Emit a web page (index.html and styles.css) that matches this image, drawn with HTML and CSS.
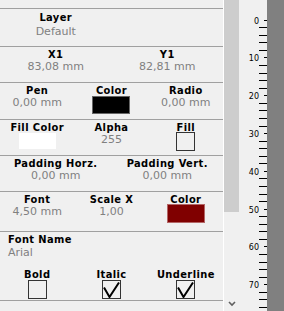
FILE: index.html
```html
<!DOCTYPE html>
<html lang="en">
    <head>
        <meta charset="UTF-8">
        <title>Properties</title>
        <link rel="stylesheet" href="styles.css">
    </head>
    <body>
        <div class="window">
            <div class="panel">
                <div class="section cols-2 h-layer">
                    <div class="field"><span class="label">Layer</span><span class="value">Default</span></div>
                </div>
                <div class="section cols-2 h-36">
                    <div class="field"><span class="label">X1</span><span class="value">83,08 mm</span></div>
                    <div class="field"><span class="label">Y1</span><span class="value">82,81 mm</span></div>
                </div>
                <div class="section cols-3 h-37">
                    <div class="field"><span class="label">Pen</span><span class="value">0,00 mm</span></div>
                    <div class="field"><span class="label">Color</span><span class="swatch black"></span></div>
                    <div class="field"><span class="label">Radio</span><span class="value">0,00 mm</span></div>
                </div>
                <div class="section cols-3 h-36">
                    <div class="field"><span class="label">Fill Color</span><span class="swatch white"></span></div>
                    <div class="field"><span class="label">Alpha</span><span class="value">255</span></div>
                    <div class="field"><span class="label">Fill</span><span class="check"></span></div>
                </div>
                <div class="section cols-2 h-36">
                    <div class="field"><span class="label">Padding Horz.</span><span class="value">0,00 mm</span></div>
                    <div class="field"><span class="label">Padding Vert.</span><span class="value">0,00 mm</span></div>
                </div>
                <div class="section cols-3 h-40">
                    <div class="field"><span class="label">Font</span><span class="value">4,50 mm</span></div>
                    <div class="field"><span class="label">Scale X</span><span class="value">1,00</span></div>
                    <div class="field"><span class="label">Color</span><span class="swatch red"></span></div>
                </div>
                <div class="section h-font last">
                    <div class="name">
                        <span class="label">Font Name</span>
                        <span class="value">Arial</span>
                    </div>
                    <div class="cols-3 checks">
                        <div class="field"><span class="label">Bold</span><span class="check"></span></div>
                        <div class="field">
                            <span class="label">Italic</span>
                            <span class="check"><svg width="17" height="17"><polyline points="1,6.5 6.5,16 16,1.5" fill="none" stroke="#000" stroke-width="2"/></svg></span>
                        </div>
                        <div class="field">
                            <span class="label">Underline</span>
                            <span class="check"><svg width="17" height="17"><polyline points="1,6.5 6.5,16 16,1.5" fill="none" stroke="#000" stroke-width="2"/></svg></span>
                        </div>
                    </div>
                </div>
            </div>

            <div class="scrollbar">
                <div class="thumb"></div>
                <svg class="arrow" width="8" height="6"><polyline points="1,1 4,4 7,1" fill="none" stroke="#606060" stroke-width="1.6"/></svg>
            </div>

            <div class="ruler">
                <svg id="ruler" width="45" height="311"></svg>
            </div>
        </div>

        <script>
            // ruler: one tick every 2 mm, a number every 10 mm
            let svg = document.getElementById("ruler");
            let html = '<rect x="28" y="0" width="17" height="311" fill="#808080"/>';

            for (let k = 0; k < 40; k++) {
                let y = Math.round(19.7 + k * 7.559) + 0.5;
                if (k % 5 == 0) {
                    html += '<line x1="25" y1="' + y + '" x2="28" y2="' + y + '" stroke="#000"/>';
                    html += '<text x="20" y="' + (y + 3) + '" text-anchor="end" class="num">' + (k * 2) + '</text>';
                } else {
                    html += '<line x1="20" y1="' + y + '" x2="28" y2="' + y + '" stroke="#000"/>';
                }
            }
            svg.innerHTML = html;
        </script>
    </body>
</html>
```

FILE: styles.css
```css
body {
    margin: 0;
    background-color: #f0f0f0;
    font-family: "DejaVu Sans", sans-serif;
    font-size: 11px;
}

.window {
    display: flex;
    height: 311px;
    overflow: hidden;
}

.panel {
    width: 223px;
    padding-top: 8px;
    border-right: 1px solid #ffffff;
}

.section {
    box-sizing: border-box;
    border-top: 1px solid #a0a0a0;
    padding-top: 2px;
}

.cols-2 {
    display: grid;
    grid-template-columns: 1fr 1fr;
}

.cols-3 {
    display: grid;
    grid-template-columns: 1fr 1fr 1fr;
}

.h-layer { height: 38px; padding-top: 3px; }
.h-36 { height: 36px; }
.h-37 { height: 37px; }
.h-40 { height: 40px; }
.h-font { height: 70px; }

.last {
    border-bottom: 1px solid #a0a0a0;
}

.field {
    display: flex;
    flex-direction: column;
    align-items: center;
    line-height: 12px;
}

.label {
    font-family: "DejaVu Sans Condensed", "DejaVu Sans", sans-serif;
    font-stretch: condensed;
    font-weight: bold;
    letter-spacing: 0.4px;
    color: #000;
}

.value {
    color: #808080;
}

.h-layer .value {
    margin-top: 2px;
}

.swatch {
    box-sizing: border-box;
    width: 38px;
    height: 18px;
    margin-top: -1px;
    border: 1px solid rgba(255, 255, 255, 0.4);
}

.black { background-color: #000; }
.red { background-color: #800000; height: 19px; margin-top: -2px; }
.white { background-color: #fff; border: none; width: 37px; height: 16px; }

.check {
    box-sizing: border-box;
    width: 19px;
    height: 19px;
    margin-top: -2px;
    border: 1px solid #333;
}

.check svg {
    display: block;
}

.name {
    display: flex;
    flex-direction: column;
    padding-left: 8px;
    line-height: 12px;
}

.name .value {
    margin-top: 1px;
}

.checks {
    margin-top: 10px;
}

.checks .check {
    margin-top: -1px;
}

.scrollbar {
    width: 15px;
    display: flex;
    flex-direction: column;
    align-items: center;
    justify-content: space-between;
}

.thumb {
    width: 15px;
    height: 212px;
    background-color: #cdcdcd;
}

.arrow {
    margin-bottom: 4px;
}

.ruler {
    width: 45px;
}

.ruler svg {
    display: block;
}

.num {
    font-family: "DejaVu Sans", sans-serif;
    font-size: 8px;
    fill: #000;
}
```
